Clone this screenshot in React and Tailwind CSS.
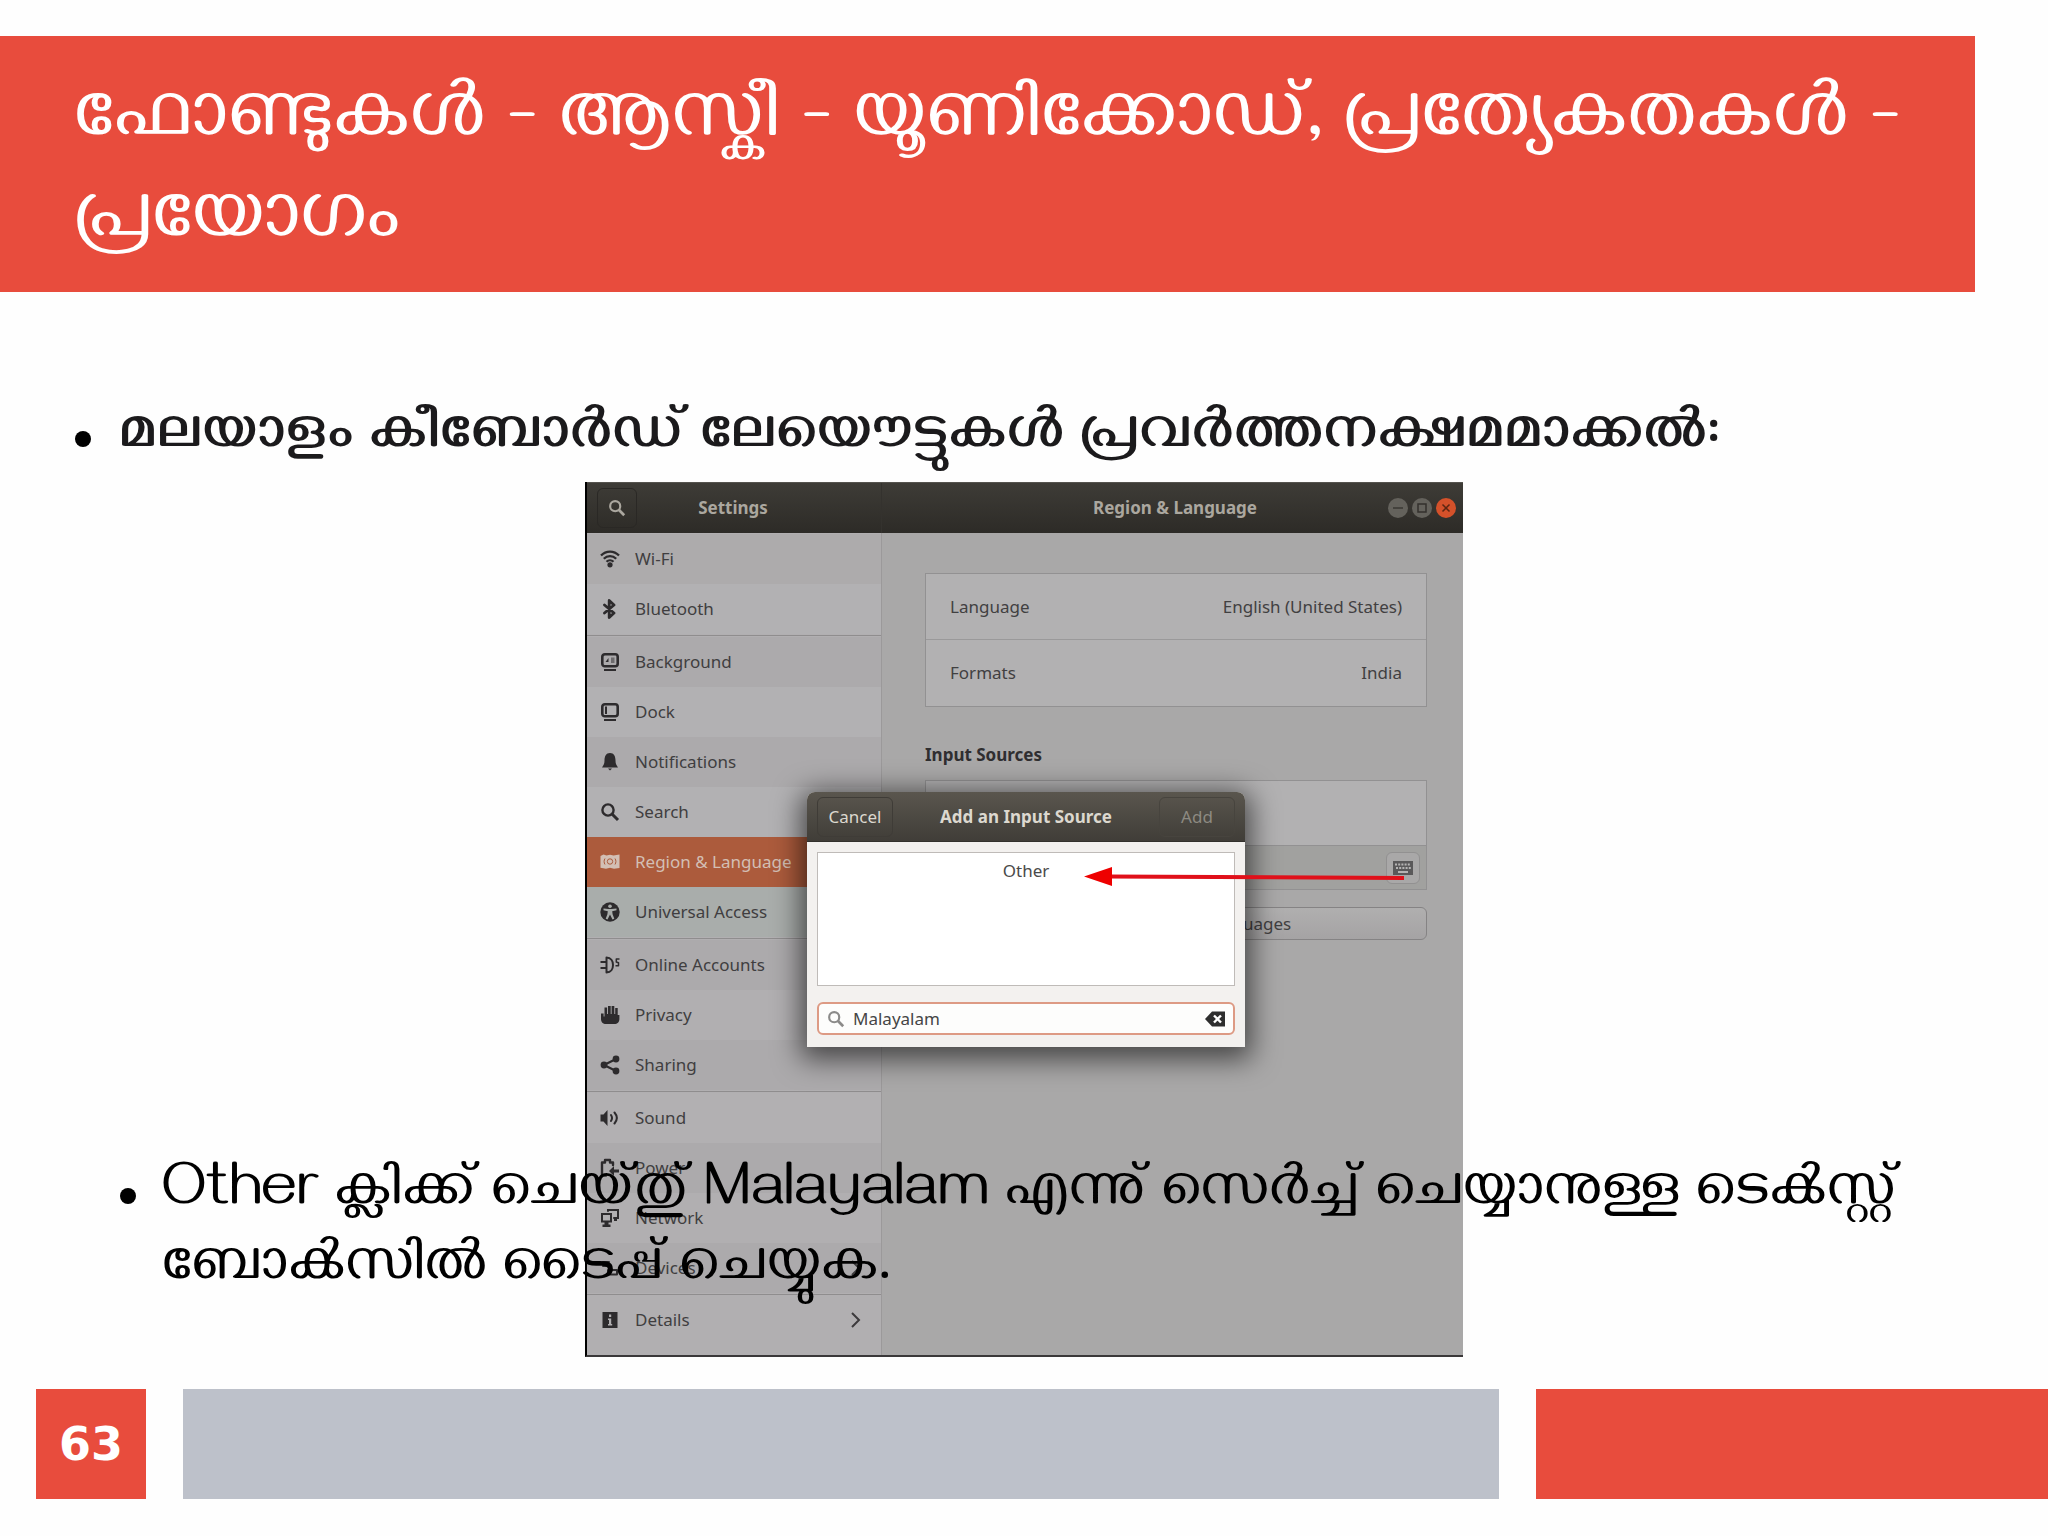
const strokeProps = {
  fill: 'none',
  stroke: 'currentColor',
  strokeWidth: 2,
  strokeLinecap: 'round',
  strokeLinejoin: 'round',
};

function Icon({ children, className = 'size-5' }) {
  return (
    <svg viewBox="0 0 20 20" className={`shrink-0 ${className}`} fill="currentColor" aria-hidden="true">
      {children}
    </svg>
  );
}

const SearchGlyph = () => (
  <g {...strokeProps} strokeWidth="2.4" strokeLinecap="butt">
    <circle cx="8" cy="8" r="5.6" />
    <path d="M12 12l6 6" strokeWidth="3" />
  </g>
);

const icons = {
  wifi: (
    <>
      <g {...strokeProps} strokeWidth="2.3" strokeLinecap="butt">
        <path d="M1 6.500C6 1.300 14 1.300 19 6.500" />
        <path d="M3.800 9.800c3.600-3.500 8.800-3.500 12.400 0" />
        <path d="M6.500 12.800c2-2 5-2 7 0" />
      </g>
      <circle cx="10" cy="15.800" r="2.600" />
    </>
  ),
  bluetooth: <path {...strokeProps} strokeWidth="2.800" d="M4.500 6l9.500 8-4.800 4.500v-17L14 6l-9.500 8" />,
  background: (
    <>
      <rect {...strokeProps} strokeWidth="2.600" x="2.300" y="2.300" width="15.400" height="12" rx="2.500" />
      <path d="M5.500 10l3-4v4zM4 17h12v2H4z" />
      <path opacity=".5" d="M11 5.500h3.500v5.500H11z" />
    </>
  ),
  dock: (
    <>
      <rect {...strokeProps} strokeWidth="2.600" x="2.300" y="2.300" width="15.400" height="12" rx="2.500" />
      <path d="M5 4.500h2v7.500H5zM4 17h12v2H4z" />
    </>
  ),
  bell: <path d="M10 1c4 0 5.500 3.500 5.500 7.500 0 3 .8 4.500 2.500 7H2c1.700-2.500 2.500-4 2.500-7C4.500 4.500 6 1 10 1zM8 16.500h4l-2 2z" />,
  search: <SearchGlyph />,
  region: (
    <>
      <path d="M.5 4l3-1.500 3 1 3.500-.8 3.500.8 6-1V16l-5.500.8-4-1-4 1-5.500-1z" />
      <g fill="none" stroke="#ac5b3c" strokeWidth="1">
        <circle cx="10" cy="9.500" r="2.700" />
        <path d="M5 6.500c-1.200 2-1.200 4 0 6M15 6.500c1.200 2 1.200 4 0 6" />
      </g>
    </>
  ),
  access: (
    <>
      <circle cx="10" cy="10" r="9.700" />
      <circle cx="10" cy="4.200" r="1.800" fill="#a9adab" />
      <path fill="#a9adab" d="M3.500 6.500l5 .5h3l5-.5v1.800l-4.300 1 .4 3 1.700 4.400-1.800.8L10 12.500 7.500 17.500l-1.800-.8 1.700-4.400.4-3-4.300-1z" />
    </>
  ),
  online: (
    <g {...strokeProps} strokeLinecap="butt">
      <path d="M.5 7H6M.5 13H6" />
      <path d="M6.500 2.500v15c4.500 0 6.500-3.500 6.500-7.500s-2-7.500-6.500-7.500z" />
      <path strokeWidth="1.500" d="M19.500 4h-3.200v3l2.200.8v3h-3" />
    </g>
  ),
  privacy: <path d="M1 8.500h2.600v3h.9V2.500h2.600V9H8V1h2.700v8h.9V1h2.700v8h.9V3h2.500v7h1.700v4c0 3-2 5-5 5H6c-3 0-5-2-5-5z" />,
  share: (
    <>
      <path {...strokeProps} strokeWidth="2.200" d="M16 4L4 10l12 6" />
      <circle cx="16" cy="4" r="3.400" />
      <circle cx="4" cy="10" r="3.400" />
      <circle cx="16" cy="16" r="3.400" />
    </>
  ),
  sound: (
    <>
      <path d="M.5 6.500h3L7.500 2v16l-4-4.500h-3z" />
      <path {...strokeProps} d="M11 7c1.200 1.800 1.200 4.200 0 6M14.500 4.500c3 3.500 3 7.500 0 11" />
    </>
  ),
  power: (
    <>
      <path {...strokeProps} strokeWidth="2.400" d="M6 17.500H2v-13h3V2h5v2.500h3V7" />
      <path d="M9 13l5-5v3.500h5v3h-5V18z" />
    </>
  ),
  network: (
    <>
      <g {...strokeProps} strokeLinejoin="miter">
        <path d="M2 6h9v7.500H2zM8 3V2h10v8h-4" />
      </g>
      <path d="M4.500 14h4v2.500h2V19h-8v-2.500h2zM14 10h3v3h-3z" />
    </>
  ),
  devices: <path {...strokeProps} d="M3 4h6M3 8h6M8 12h9v4.500H8z" />,
  details: (
    <>
      <path d="M2.500 2h15v16h-15z" />
      <path fill="#b1afb1" d="M9 4.500h2.200V7H9zM8 8.500h3.200v5.500h1v1.500H8V14h1v-4H8z" />
    </>
  ),
};

const groups = [
  [
    { label: 'Wi-Fi', icon: 'wifi', bg: 'bg-[#adabac]' },
    { label: 'Bluetooth', icon: 'bluetooth', bg: 'bg-[#b2b1b3]' },
  ],
  [
    { label: 'Background', icon: 'background', bg: 'bg-[#acaaac]' },
    { label: 'Dock', icon: 'dock', bg: 'bg-[#b2b1b3]' },
    { label: 'Notifications', icon: 'bell', bg: 'bg-[#acaaac]' },
    { label: 'Search', icon: 'search', bg: 'bg-[#b2b1b3]' },
    { label: 'Region & Language', icon: 'region', bg: 'bg-[#ac5b3c]', active: true },
    { label: 'Universal Access', icon: 'access', bg: 'bg-[#a9adab]' },
  ],
  [
    { label: 'Online Accounts', icon: 'online', bg: 'bg-[#acaaac]' },
    { label: 'Privacy', icon: 'privacy', bg: 'bg-[#b1afb1]' },
    { label: 'Sharing', icon: 'share', bg: 'bg-[#acaaac]' },
  ],
  [
    { label: 'Sound', icon: 'sound', bg: 'bg-[#b2b0b2]' },
    { label: 'Power', icon: 'power', bg: 'bg-[#acaaac]' },
    { label: 'Network', icon: 'network', bg: 'bg-[#b1afb1]' },
    { label: 'Devices', icon: 'devices', bg: 'bg-[#acaaac]', more: true },
  ],
  [{ label: 'Details', icon: 'details', bg: 'bg-[#b1afb1]', more: true }],
];

function Chevron() {
  return (
    <svg viewBox="0 0 12 16" className="ml-auto h-4 w-3" aria-hidden="true">
      <path d="M3 1l7 7-7 7" fill="none" stroke="#3c3a3c" strokeWidth="2" />
    </svg>
  );
}

function Sidebar() {
  return (
    <nav className="w-[295px] shrink-0 border-r border-[#9b999a] bg-[#b1afb1]">
      {groups.map((group, index) => (
        <ul key={index} className={index < groups.length - 1 ? 'border-b border-[#8f8d8e] py-px' : ''}>
          {group.map((item) => (
            <li key={item.label}>
              <a
                href="#"
                className={`flex h-[50px] items-center gap-[15px] pr-5 pl-[13px] ${item.bg} ${
                  item.active ? 'text-[#d3bfb4]' : 'text-[#2d2b2d]'
                }`}
              >
                <Icon>{icons[item.icon]}</Icon>
                <span className={item.active ? '' : 'text-[#403e40]'}>{item.label}</span>
                {item.more && <Chevron />}
              </a>
            </li>
          ))}
        </ul>
      ))}
    </nav>
  );
}

function TitleBar() {
  return (
    <div className="flex h-[51px] items-center border-t border-[#55534e] bg-linear-to-b from-[#3e3c37] to-[#2d2b27] text-[#aba79f]">
      <div className="flex h-full w-[295px] shrink-0 items-center border-r border-[#34322e] pl-2.5">
        <button
          type="button"
          aria-label="Search settings"
          className="flex h-10 w-10 items-center justify-center rounded-md border border-[#2a2825]"
        >
          <Icon className="size-[18px]">
            <SearchGlyph />
          </Icon>
        </button>
        <h2 className="flex-1 pr-[52px] text-center font-bold">Settings</h2>
      </div>
      <h2 className="flex-1 pl-20 text-center font-bold">Region &amp; Language</h2>
      <div className="flex gap-1 pr-[7px]">
        <button type="button" aria-label="Minimize" className="size-5 rounded-full bg-[#64625c]">
          <svg viewBox="0 0 20 20" aria-hidden="true">
            <path d="M5 10h10" stroke="#3a3833" strokeWidth="1.500" />
          </svg>
        </button>
        <button type="button" aria-label="Maximize" className="size-5 rounded-full bg-[#64625c]">
          <svg viewBox="0 0 20 20" aria-hidden="true">
            <path d="M6 6h8v8H6z" fill="none" stroke="#33312d" strokeWidth="1.500" />
          </svg>
        </button>
        <button type="button" aria-label="Close" className="size-5 rounded-full bg-[#d4512a]">
          <svg viewBox="0 0 20 20" aria-hidden="true">
            <path d="M6.500 6.500l7 7M13.500 6.500l-7 7" stroke="#5c2612" strokeWidth="1.500" />
          </svg>
        </button>
      </div>
    </div>
  );
}

function KeyboardIcon() {
  return (
    <svg viewBox="0 0 20 16" className="h-4 w-5" aria-hidden="true">
      <path d="M0 1h20v14H0z" fill="#5a595a" />
      <path d="M2 4.500h16M3 8h15" stroke="#b5b4b4" strokeWidth="2" strokeDasharray="2 1.200" />
      <path d="M5 12h10" stroke="#b5b4b4" strokeWidth="2" />
    </svg>
  );
}

function RegionPanel() {
  return (
    <div className="flex-1 bg-[#a9a8a8] pt-10 pr-9 pl-[43px] text-[#414041]">
      <dl className="border border-[#929192] bg-[#b2b1b2]">
        <div className="flex h-[66px] items-center justify-between border-b border-[#9a999a] px-6">
          <dt>Language</dt>
          <dd>English (United States)</dd>
        </div>
        <div className="flex h-[66px] items-center justify-between px-6">
          <dt>Formats</dt>
          <dd>India</dd>
        </div>
      </dl>
      <h3 className="mt-9 font-bold text-[#2f2e30]">Input Sources</h3>
      <div className="mt-[13px] border border-[#929192] bg-[#b2b1b2]">
        <div className="h-[65px] border-b border-[#929192]" />
        <div className="flex h-[43px] items-center justify-end bg-[#a1a19f] pr-1.5">
          <button
            type="button"
            aria-label="Show keyboard layout"
            className="flex h-8 w-[34px] items-center justify-center rounded-md border border-[#929191] bg-[#a9a8a8]"
          >
            <KeyboardIcon />
          </button>
        </div>
      </div>
      <button
        type="button"
        className="mt-[17px] h-[33px] w-full rounded-md border border-[#858384] bg-linear-to-b from-[#b0afaf] to-[#a5a3a4]"
      >
        Manage Installed Languages
      </button>
    </div>
  );
}

function AddSourceDialog() {
  return (
    <div
      role="dialog"
      aria-label="Add an Input Source"
      className="absolute top-[310px] left-[220px] w-[438px] rounded-t-lg bg-[#f3f1ef] shadow-[0_6px_28px_6px_rgba(0,0,0,0.6)]"
    >
      <div className="flex h-[50px] items-center justify-between rounded-t-lg border-b border-[#33312d] bg-linear-to-b from-[#5a564e] to-[#403d38] px-2.5 text-[#dcd8cf]">
        <button type="button" className="h-10 w-[76px] rounded-md border border-[#3f3c37]">
          Cancel
        </button>
        <h3 className="font-bold">Add an Input Source</h3>
        <button type="button" disabled className="h-10 w-[76px] rounded-md border border-[#47443e] text-[#8d8a82]">
          Add
        </button>
      </div>
      <div className="p-2.5 pb-3">
        <div className="h-[134px] border border-[#bfbbb8] bg-white pt-1.5 text-center text-[#4a4a4a]">
          Other
        </div>
        <label className="mt-4 flex h-[33px] items-center gap-2 rounded-md border-2 border-[#dd9a84] bg-[#fdfdfc] px-2">
          <Icon className="size-[18px] text-[#8b8a89]">
            <SearchGlyph />
          </Icon>
          <input
            type="text"
            aria-label="Search input sources"
            defaultValue="Malayalam"
            className="min-w-0 flex-1 bg-transparent text-[#454545] outline-none"
          />
          <button type="button" aria-label="Clear">
            <svg viewBox="0 0 20 16" className="h-4 w-5" aria-hidden="true">
              <path d="M0 8l7-7.500h13v15H7z" fill="#2e2e2e" />
              <path d="M9 4.500l7 7M16 4.500l-7 7" stroke="#fff" strokeWidth="2.400" />
            </svg>
          </button>
        </label>
      </div>
    </div>
  );
}

function SettingsWindow() {
  return (
    <div className="relative flex min-h-[875px] w-[878px] flex-col border-b-2 border-l-2 border-b-[#3a3839] border-l-black font-['Noto_Sans',sans-serif] text-[17px] leading-6">
      <TitleBar />
      <div className="flex flex-1">
        <Sidebar />
        <RegionPanel />
      </div>
      <AddSourceDialog />
      {/* pointer to the "Other" entry */}
      <svg viewBox="0 0 322 22" className="absolute top-[384px] left-[497px] w-[322px]" aria-hidden="true">
        <path d="M24 10.500L320 12" stroke="#e0101a" strokeWidth="4" />
        <path d="M0 10.500L28 1v19z" fill="#ee0000" />
      </svg>
    </div>
  );
}

export default function App() {
  return (
    <div className="flex min-h-screen flex-col overflow-x-hidden bg-[#fefefe] font-['Gayathri','Manjari','Noto_Sans_Malayalam',sans-serif]">
      <header className="mt-9 mr-[73px] bg-[#e84c3d] pt-[38px] pr-12 pb-4 pl-[74px]">
        <h1 className="text-[83px] leading-[101px] text-white">
          ഫോണ്ടുകൾ - ആസ്കീ - യൂണിക്കോഡ്, പ്രത്യേകതകൾ - പ്രയോഗം
        </h1>
      </header>

      <main className="grid flex-1">
        <div className="mt-[190px] flex items-start justify-center [grid-area:1/1]">
          <SettingsWindow />
        </div>
        <ul className="pointer-events-none z-10 flex flex-col pt-[109px] pl-[75px] text-[62px] leading-[75px] [grid-area:1/1]">
          <li className="flex gap-7 font-bold text-[#1b1a1c]">
            <span className="mt-[30px] size-4 shrink-0 rounded-full bg-black" />
            മലയാളം കീബോർഡ് ലേയൌട്ടുകൾ പ്രവർത്തനക്ഷമമാക്കൽ:
          </li>
          <li className="mt-[682px] mr-[120px] ml-[45px] flex gap-[26px] text-black">
            <span className="mt-[30px] size-4 shrink-0 rounded-full bg-black" />
            <p>
              Other ക്ലിക്ക് ചെയ്തു് Malayalam എന്നു് സെർച്ച് ചെയ്യാനുള്ള ടെൿസ്റ്റ് ബോൿസിൽ ടൈപ്പ് ചെയ്യുക.
            </p>
          </li>
        </ul>
      </main>

      <footer className="mb-[37px] flex h-[110px] gap-[37px] pl-9">
        <div className="flex w-[110px] items-center justify-center bg-[#e84c3d] font-['DejaVu_Sans',sans-serif] text-[46px] font-bold text-white">
          63
        </div>
        <div className="flex-[18] bg-[#bdc1ca]" />
        <div className="flex-[7] bg-[#e84c3d]" />
      </footer>
    </div>
  );
}
